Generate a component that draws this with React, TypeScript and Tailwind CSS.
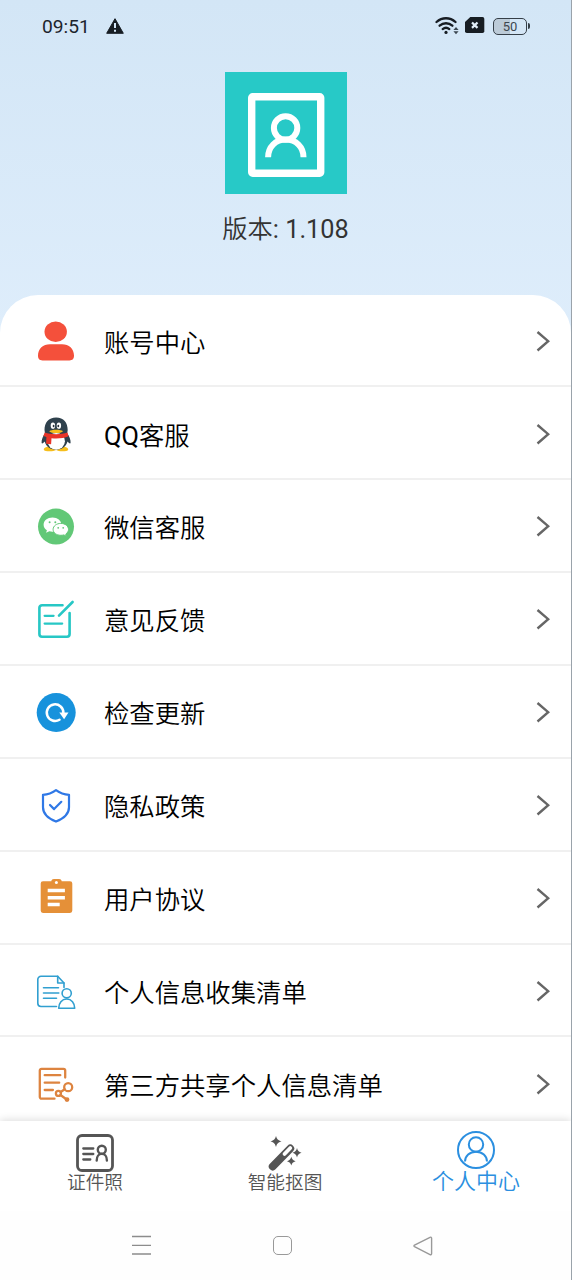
import type { ReactNode } from "react";

type MenuItem = {
  prefix?: string;
  label: string;
  icon: ReactNode;
};

const menuItems: MenuItem[] = [
  { label: "账号中心", icon: <AccountIcon /> },
  { prefix: "QQ", label: "客服", icon: <PenguinIcon /> },
  { label: "微信客服", icon: <WechatIcon /> },
  { label: "意见反馈", icon: <FeedbackIcon /> },
  { label: "检查更新", icon: <UpdateIcon /> },
  { label: "隐私政策", icon: <ShieldIcon /> },
  { label: "用户协议", icon: <ClipboardIcon /> },
  { label: "个人信息收集清单", icon: <PersonalInfoIcon /> },
  { label: "第三方共享个人信息清单", icon: <SharedInfoIcon /> },
];

function MenuSvg({ children }: { children: ReactNode }) {
  return (
    <svg viewBox="0 0 48 48" fill="none" className="size-12 shrink-0" aria-hidden="true">
      {children}
    </svg>
  );
}

function AccountIcon() {
  return (
    <MenuSvg>
      <g fill="#f4503b">
        <ellipse cx="23.7" cy="14.800" rx="11.2" ry="10.3" />
        <path d="M6 38.600c0-7 5-11.400 12-11.400h12c7 0 12 4.400 12 11.400 0 3.500-1.500 4.800-4.500 4.800h-27C7.500 43.400 6 42.100 6 38.600z" />
      </g>
    </MenuSvg>
  );
}

function PenguinIcon() {
  return (
    <MenuSvg>
      <path d="M20 36c-5 0-8.500 1.900-8.200 3.700.3 1.800 9 2.400 12.300.4 3.200 2 11.800 1.400 12.100-.4.3-1.900-3.200-3.700-8.200-3.700z" fill="#f6be1c" />
      <path d="M13 23.500c-2 2.500-3.700 6.500-3.400 9.300.2 1.300 1.900.3 3.100-1.300 1.400 5 5.500 8.200 11.400 8.200s10-3.200 11.400-8.200c1.200 1.600 2.900 2.600 3.100 1.300.3-2.800-1.400-6.800-3.400-9.300l.5-3.500c0-7.500-4-12.600-11.600-12.600S12.500 12.500 12.500 20z" fill="#2f414d" />
      <ellipse cx="24.200" cy="31.300" rx="8.700" ry="8.400" fill="#fff" />
      <ellipse cx="20.900" cy="15.700" rx="2.200" ry="3.100" fill="#fff" />
      <ellipse cx="26.900" cy="15.700" rx="2.200" ry="3.100" fill="#fff" />
      <ellipse cx="21.600" cy="16" rx=".9" ry="1.300" fill="#27333c" />
      <ellipse cx="26.300" cy="16" rx=".9" ry="1.300" fill="#27333c" />
      <path d="M17.200 21.200c1.800-2 12-2 13.800 0-1.600 2.500-12.200 2.500-13.800 0z" fill="#f6be1c" />
      <path d="M12.700 22.600c6 2.200 16.700 2.200 22.800 0l1 3.700c-4.300 2-11.500 2.700-17 1.900l-.4 6-5-.5.300-6.700-3-1z" fill="#e83428" />
    </MenuSvg>
  );
}

function WechatIcon() {
  return (
    <MenuSvg>
      <circle cx="24" cy="24.600" r="18" fill="#62c877" />
      <path d="M20.500 15.600c-5 0-8.900 3.100-8.900 7.100 0 2.300 1.300 4.200 3.300 5.500l-.8 2.600 3.200-1.500c1 .3 2.100.4 3.200.4 5 0 8.900-3.100 8.900-7s-3.900-7.100-8.900-7.100z" fill="#fff" />
      <path d="M28.800 21.400c4.300 0 7.700 2.600 7.700 6 0 1.900-1 3.500-2.700 4.600l.6 2.200-2.600-1.300c-1 .3-1.900.4-3 .4-4.300 0-7.700-2.600-7.700-5.900s3.400-6 7.700-6z" fill="#fff" stroke="#62c877" strokeWidth="1" />
      <g fill="#62c877">
        <circle cx="17.600" cy="20.300" r="1" />
        <circle cx="23.300" cy="20.300" r="1" />
        <circle cx="26.200" cy="25.800" r=".9" />
        <circle cx="31.200" cy="25.800" r=".9" />
      </g>
    </MenuSvg>
  );
}

function FeedbackIcon() {
  return (
    <MenuSvg>
      <g stroke="#27c7c5" strokeWidth="2.600" strokeLinecap="round" strokeLinejoin="round">
        <path d="M30.500 10.200H10a2.600 2.600 0 0 0-2.600 2.600v26.300a2.600 2.600 0 0 0 2.600 2.600h25a2.600 2.600 0 0 0 2.600-2.600V18" />
        <path d="M40.600 7 27 20.700" />
        <path d="M12.600 20.800h9M12.600 28.600h17.600" strokeWidth="2.200" />
      </g>
    </MenuSvg>
  );
}

function UpdateIcon() {
  return (
    <MenuSvg>
      <circle cx="24.200" cy="24.600" r="19.500" fill="#1792dc" />
      <path d="M27.500 31.700A8.300 8.300 0 1 1 31.400 25" stroke="#fff" strokeWidth="2.500" strokeLinecap="round" />
      <path d="M27.300 24.500h9.200l-4.400 6.800z" fill="#fff" />
    </MenuSvg>
  );
}

function ShieldIcon() {
  return (
    <MenuSvg>
      <g stroke="#2f78e6" strokeWidth="2.200" strokeLinecap="round" strokeLinejoin="round">
        <path d="M24 9.200c3.800 2.800 8.200 4.400 13 4.600v12.500c0 6.500-5.400 11.300-13 14.300-7.600-3-13-7.800-13-14.300V13.800c4.800-.2 9.200-1.800 13-4.600z" />
        <path d="m18 24 4.100 4.100 7.200-7.300" />
      </g>
    </MenuSvg>
  );
}

function ClipboardIcon() {
  return (
    <MenuSvg>
      <path d="M11 7.300h8.300c.2-1.600 1.200-2.400 2.700-2.400h5c1.500 0 2.500.8 2.700 2.400H38a2.300 2.300 0 0 1 2.300 2.300v27a2.300 2.300 0 0 1-2.300 2.300H11a2.300 2.300 0 0 1-2.300-2.300v-27A2.300 2.300 0 0 1 11 7.300z" fill="#e59038" />
      <circle cx="24.400" cy="8.400" r="1.500" fill="#fff" />
      <path d="M15.700 16.500h17.200M15.700 23.700h17.200M15.700 30.500h12" stroke="#fff" strokeWidth="3.500" />
    </MenuSvg>
  );
}

function PersonalInfoIcon() {
  return (
    <MenuSvg>
      <g stroke="#319fd0" strokeWidth="1.600" strokeLinecap="round" strokeLinejoin="round">
        <path d="M24.500 39.500H9a3.200 3.200 0 0 1-3.200-3.200V12.500A3.200 3.200 0 0 1 9 9.300h16.700l6.300 6.700v4.500" />
        <path d="M25.700 9.300V16H32" />
        <path d="M11.500 20.800h15M11.500 26h15.300M11.500 31.200h13" />
        <circle cx="34.700" cy="26.300" r="4.600" />
        <path d="M26.700 41.200c0-5.200 3.200-9.200 8-9.200s8 4 8 9.200z" />
      </g>
    </MenuSvg>
  );
}

function SharedInfoIcon() {
  return (
    <MenuSvg>
      <g stroke="#dd8440" strokeWidth="2.300" strokeLinecap="round" strokeLinejoin="round">
        <path d="M22.500 38.700H9.500A1.700 1.700 0 0 1 7.800 37V10.500a1.700 1.700 0 0 1 1.700-1.700h22a1.700 1.700 0 0 1 1.700 1.700v7" />
        <path d="M12.700 15.200h15.600M12.700 22.700h14.500M12.700 30h8.200" />
        <circle cx="36.200" cy="27.200" r="4" />
        <circle cx="26.400" cy="33.400" r="2.500" />
        <circle cx="35" cy="39.600" r="1.300" fill="#dd8440" />
        <path d="m28.700 32 4-2.700M28.500 35l5.500 4" />
      </g>
    </MenuSvg>
  );
}

function StatusBar() {
  return (
    <div className="flex h-[52px] items-center justify-between pl-[42px] pr-[41px] text-[#1c242c]">
      <div className="flex items-center gap-4">
        <span className="w-12 pt-px text-[19.200px] leading-6 whitespace-nowrap">09:51</span>
        <svg viewBox="0 0 18 16" className="h-4 w-[18px]" aria-hidden="true">
          <path d="M9 .7 17.300 15.300H.7z" fill="#171d23" stroke="#171d23" strokeLinejoin="round" />
          <path d="M9 5v5M9 11.700v2" stroke="#d4e6f6" strokeWidth="2" />
        </svg>
      </div>
      <div className="flex items-center">
        <svg viewBox="0 0 24 20" fill="none" className="h-5 w-6" aria-hidden="true">
          <g stroke="#171d23" strokeWidth="2.300" strokeLinecap="round">
            <path d="M1.500 6c5.600-5 13.400-5 19 0" />
            <path d="M4.600 9.700c3.800-3.300 9-3.300 12.800 0" />
            <path d="M7.700 13.100c2-1.700 4.600-1.700 6.600 0" />
          </g>
          <circle cx="11" cy="16.400" r="1.600" fill="#171d23" />
          <path d="m21 11 2.600 3h-5.200zM21 18.200l-2.600-3h5.200z" fill="#3a4650" />
        </svg>
        <svg viewBox="0 0 20 16" className="ml-[6px] h-4 w-5 -translate-y-px" aria-hidden="true">
          <path d="M5.300 0H17.500A1.800 1.800 0 0 1 19.300 1.800v12.400a1.800 1.800 0 0 1-1.800 1.800H1.800A1.800 1.800 0 0 1 0 14.200V5z" fill="#171d23" />
          <path d="m7 5.500 5.500 5.400m0-5.400L7 10.900" stroke="#e3effa" strokeWidth="2.200" />
        </svg>
        <div className="ml-2 flex h-[17px] w-[34px] items-center justify-center rounded-[5px] border-[1.500px] border-[#353f48] bg-linear-to-r from-[#bccbd8] from-50% to-[#d4e6f6] to-50% text-[13px] leading-none text-[#3c464f]">
          50
        </div>
        <span className="ml-px h-[6px] w-[2px] rounded-r bg-[#353f48]" />
      </div>
    </div>
  );
}

function AppLogo() {
  return (
    <svg viewBox="0 0 122 122" fill="none" className="size-[122px] bg-[#27c9c7]" aria-hidden="true">
      <rect x="26.700" y="24.700" width="69" height="76.500" rx="1" stroke="#fff" strokeWidth="7.400" strokeLinejoin="round" />
      <circle cx="60.600" cy="56" r="11.700" stroke="#fff" strokeWidth="6" />
      <path d="M43.100 85.200C43.100 75 50.500 67.600 60.800 67.600S78.500 75 78.500 85.200" stroke="#fff" strokeWidth="6" />
    </svg>
  );
}

function MenuRow({ prefix, label, icon }: MenuItem) {
  return (
    <li className="flex h-[92.860px] shrink-0 items-center border-b-2 border-[#f0f0f0] pt-[1.500px] pl-8 pr-[21px]">
      {icon}
      <span className="ml-6 flex-1 pt-1 text-[25.350px] leading-9 font-[350] text-black">
        {prefix && <span className="font-normal">{prefix}</span>}
        {label}
      </span>
      <svg viewBox="0 0 14 22" fill="none" className="h-[22px] w-3.5" aria-hidden="true">
        <path d="m1.500 2 10.700 9.200L1.500 20.500" stroke="#666" strokeWidth="2.400" />
      </svg>
    </li>
  );
}

function TabBar() {
  return (
    <nav className="z-10 flex h-[90px] shrink-0 bg-white shadow-[0_-1px_8px_rgba(0,0,0,0.14)]">
      <div className="flex flex-1 flex-col items-center pt-[13px] text-[#555]">
        <svg viewBox="0 0 38 38" fill="none" className="size-[38px]" aria-hidden="true">
          <g stroke="#555" strokeLinecap="round">
            <rect x="1.500" y="1.500" width="35" height="35" rx="4.500" strokeWidth="2.800" />
            <path d="M7.300 14.500h10M7.300 20h10M7.300 25.500h7" strokeWidth="2.300" />
            <circle cx="25.800" cy="15.800" r="4" strokeWidth="2.400" />
            <path d="M20.700 26.500c0-4 2-6.600 5.100-6.600s5.100 2.600 5.100 6.600" strokeWidth="2.400" />
          </g>
        </svg>
        <span className="text-[18.700px] leading-[22px] font-[350]">证件照</span>
      </div>
      <div className="flex flex-1 flex-col items-center pt-[13px] text-[#555]">
        <svg viewBox="0 0 38 38" fill="none" className="size-[38px]" aria-hidden="true">
          <path d="M6.700 32.500 24.300 14.500" stroke="#555" strokeWidth="7.800" strokeLinecap="round" />
          <path d="m18.500 20 5.800-6" stroke="#fff" strokeWidth="3.800" strokeLinecap="round" />
          <g fill="#555">
            <path d="M10 2c.8 3 2 4.500 5.500 5.400C12 8.300 10.800 9.700 10 13c-.8-3.300-2-4.700-5.500-5.600C8 6.500 9.200 5 10 2z" />
            <path d="M31 14c.6 2.700 1.700 3.900 4.500 4.700-2.800.8-3.900 2-4.500 4.700-.6-2.700-1.700-3.900-4.500-4.700 2.800-.8 3.900-2 4.500-4.700z" />
            <path d="M25.300 22.800c.6 2.400 1.700 3.700 4.300 4.400-2.600.7-3.700 2-4.300 4.400-.6-2.400-1.700-3.700-4.300-4.400 2.600-.7 3.700-2 4.300-4.400z" />
          </g>
        </svg>
        <span className="text-[18.700px] leading-[22px] font-[350]">智能抠图</span>
      </div>
      <div className="flex flex-1 flex-col items-center pt-[9.500px] pl-px text-[#2b8fe0]">
        <svg viewBox="0 0 38 38" fill="none" className="size-[38px]" aria-hidden="true">
          <g stroke="#2b8fe0" strokeWidth="2">
            <circle cx="19" cy="19" r="18" />
            <circle cx="19" cy="13.500" r="7.200" />
            <path d="M8 30.500c0-5.700 4.700-9.800 11-9.800s11 4.100 11 9.800" />
          </g>
        </svg>
        <span className="text-[22px] leading-[26px] font-[350]">个人中心</span>
      </div>
    </nav>
  );
}

function SystemNav() {
  return (
    <div className="z-10 flex h-[69px] shrink-0 items-center justify-between bg-[#fefefe] pl-[131px] pr-[138px]">
      <svg viewBox="0 0 21 21" className="size-[21px]" aria-hidden="true">
        <path d="M1 1.500h19M1 10.300h19M1 19h19" stroke="#8c8c8c" strokeWidth="1.300" />
      </svg>
      <span className="size-[19px] rounded-[5px] border-[1.500px] border-[#999]" />
      <svg viewBox="0 0 20 20" fill="none" className="size-5" aria-hidden="true">
        <path d="M1.500 9.200 17 1.300c1-.4 1.600 0 1.600 1v15.300c0 1-.7 1.400-1.600 1L1.500 10.700c-.7-.4-.7-1.100 0-1.500z" stroke="#999" strokeWidth="1.400" />
      </svg>
    </div>
  );
}

export default function App() {
  return (
    <div className="flex h-[1280px] w-[572px] flex-col overflow-hidden border-r border-[#9aa3ab] bg-linear-to-b from-[#d3e6f6] to-[#deedfb] to-[330px] font-[Roboto,'Noto_Sans_CJK_SC',sans-serif]">
      <StatusBar />
      <header className="flex h-[242.500px] shrink-0 flex-col items-center pt-[19.500px]">
        <AppLogo />
        <p className="mt-5 text-[25.300px] leading-8 font-[350] text-[#333]">
          版本<span className="font-normal">: 1.108</span>
        </p>
      </header>
      <main className="min-h-0 flex-1 overflow-hidden rounded-t-[38px] bg-white">
        <ul className="flex flex-col">
          {menuItems.map((item) => (
            <MenuRow key={item.label} {...item} />
          ))}
        </ul>
      </main>
      <TabBar />
      <SystemNav />
    </div>
  );
}
